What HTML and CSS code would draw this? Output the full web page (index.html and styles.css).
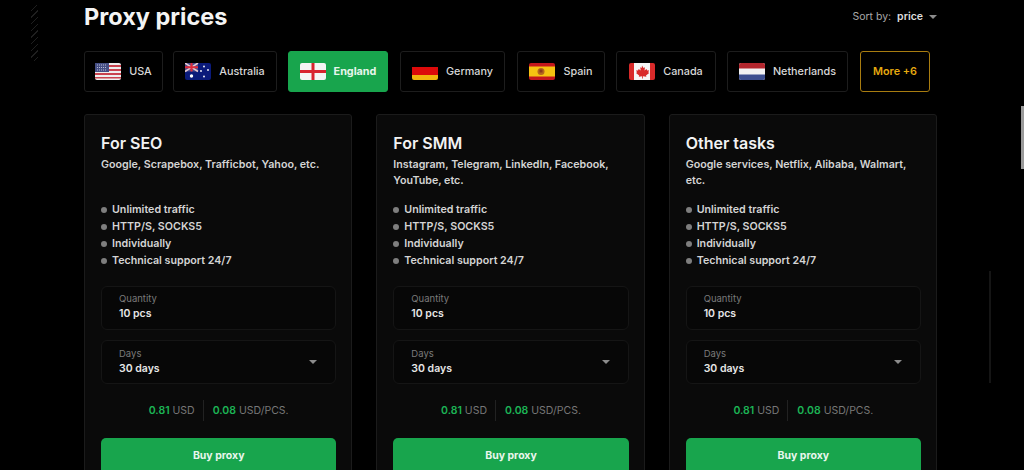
FILE: index.html
```html
<!DOCTYPE html>
<html lang="en">
<head>
    <meta charset="UTF-8">
    <title>Proxy prices</title>
    <link rel="stylesheet" href="styles.css">
</head>
<body>
    <div class="hatch"></div>
    <div class="side-line"></div>
    <div class="scroll-thumb"></div>
    <main class="page">
        <div class="head">
            <h1>Proxy prices</h1>
            <div class="sort"><span>Sort by:</span><b>price</b><i class="arrow"></i></div>
        </div>
        <div class="tabs">
            <a class="tab tab-usa">
                <svg class="flag" viewBox="0 0 26 17"><rect width="26" height="17" rx="2" fill="#eee"/><path d="M0 2h26v2H0zM0 6h26v2H0zM0 10h26v2H0zM0 14h26v1.500H0z" fill="#c9424e"/><rect width="14" height="9" fill="#454f85"/><path d="M2 2h10M2 4.500h10M2 7h10" stroke="#b9bcd4" stroke-width="1" stroke-dasharray="1 1"/></svg>
                USA
            </a>
            <a class="tab tab-aus">
                <svg class="flag" viewBox="0 0 26 17"><rect width="26" height="17" rx="2" fill="#0a1a7a"/><rect width="13" height="8.500" fill="#4a4a8c"/><path d="M0 0l13 8.500M13 0L0 8.500" stroke="#e6c9cf" stroke-width="1.500"/><path d="M6.500 0v8.500M0 4.250h13" stroke="#e02a3a" stroke-width="2"/><circle cx="6.500" cy="13" r="1.700" fill="#fff"/><circle cx="19" cy="3.500" r=".9" fill="#fff"/><circle cx="23" cy="7" r=".9" fill="#fff"/><circle cx="16" cy="8" r=".9" fill="#fff"/><circle cx="19" cy="13.500" r=".9" fill="#fff"/></svg>
                Australia
            </a>
            <a class="tab tab-eng active">
                <svg class="flag" viewBox="0 0 26 17"><rect width="26" height="17" rx="2" fill="#f4f4f4"/><path d="M13 0v17M0 8.500h26" stroke="#d8232f" stroke-width="3"/></svg>
                England
            </a>
            <a class="tab tab-ger">
                <svg class="flag" viewBox="0 0 26 17"><rect y="4" width="26" height="9" fill="#dd0a0a"/><path d="M0 12h26v3a2 2 0 0 1-2 2H2a2 2 0 0 1-2-2z" fill="#f2b40c"/></svg>
                Germany
            </a>
            <a class="tab tab-esp">
                <svg class="flag" viewBox="0 0 26 17"><rect width="26" height="17" rx="2" fill="#c4161c"/><rect y="3.500" width="26" height="10" fill="#f5c211"/><circle cx="12" cy="8.500" r="3.500" fill="#b5651d"/><rect x="10.500" y="6.500" width="3" height="3" fill="#8c3a1a"/></svg>
                Spain
            </a>
            <a class="tab tab-can">
                <svg class="flag" viewBox="0 0 26 17"><rect width="26" height="17" rx="2" fill="#d92a2a"/><rect x="5" width="16" height="17" fill="#f6f6f6"/><path d="M13 2.500l1.500 2.500 1.500-.7-.5 3.200 2-1.500.7 1.500 1.800-.3-.7 2.300.9.600-3.200 2.400.4 1.200-3.400-.5v2.300h-.8v-2.300l-3.400.5.400-1.200-3.200-2.400.9-.6-.7-2.300 1.800.3.700-1.500 2 1.500-.5-3.200 1.500.7z" fill="#d92a2a"/></svg>
                Canada
            </a>
            <a class="tab tab-ned">
                <svg class="flag" viewBox="0 0 26 17"><rect width="26" height="17" rx="2" fill="#f2f2f2"/><path d="M0 5.500V2a2 2 0 0 1 2-2h22a2 2 0 0 1 2 2v3.500z" fill="#b3262d"/><path d="M0 11.500h26V15a2 2 0 0 1-2 2H2a2 2 0 0 1-2-2z" fill="#3d4f8f"/></svg>
                Netherlands
            </a>
            <a class="tab tab-more">More +6</a>
        </div>
        <div class="cards">
            <section class="card">
                <h2>For SEO</h2>
                <p class="sites">Google, Scrapebox, Trafficbot, Yahoo, etc.</p>
                <ul class="features">
                    <li>Unlimited traffic</li>
                    <li>HTTP/S, SOCKS5</li>
                    <li>Individually</li>
                    <li>Technical support 24/7</li>
                </ul>
                <div class="field"><label>Quantity</label><span>10 pcs</span></div>
                <div class="field field-select"><label>Days</label><span>30 days</span><i class="arrow"></i></div>
                <div class="price"><div><b>0.81</b> USD</div><div><b>0.08</b> USD/PCS.</div></div>
                <a class="buy">Buy proxy</a>
            </section>
            <section class="card">
                <h2>For SMM</h2>
                <p class="sites">Instagram, Telegram, LinkedIn, Facebook, YouTube, etc.</p>
                <ul class="features">
                    <li>Unlimited traffic</li>
                    <li>HTTP/S, SOCKS5</li>
                    <li>Individually</li>
                    <li>Technical support 24/7</li>
                </ul>
                <div class="field"><label>Quantity</label><span>10 pcs</span></div>
                <div class="field field-select"><label>Days</label><span>30 days</span><i class="arrow"></i></div>
                <div class="price"><div><b>0.81</b> USD</div><div><b>0.08</b> USD/PCS.</div></div>
                <a class="buy">Buy proxy</a>
            </section>
            <section class="card">
                <h2>Other tasks</h2>
                <p class="sites">Google services, Netflix, Alibaba, Walmart, etc.</p>
                <ul class="features">
                    <li>Unlimited traffic</li>
                    <li>HTTP/S, SOCKS5</li>
                    <li>Individually</li>
                    <li>Technical support 24/7</li>
                </ul>
                <div class="field"><label>Quantity</label><span>10 pcs</span></div>
                <div class="field field-select"><label>Days</label><span>30 days</span><i class="arrow"></i></div>
                <div class="price"><div><b>0.81</b> USD</div><div><b>0.08</b> USD/PCS.</div></div>
                <a class="buy">Buy proxy</a>
            </section>
        </div>
    </main>
</body>
</html>
```

FILE: styles.css
```css
html, body {
    margin: 0;
    height: 470px;
    overflow: hidden;
    background-color: #000000;
}
body {
    font-family: Inter, "Liberation Sans", sans-serif;
    color: #eeeeee;
}
.page {
    width: 853px;
    margin-left: 84px;
}
.head {
    display: flex;
    justify-content: space-between;
    align-items: center;
    height: 33px;
}
h1 {
    margin: 0;
    font-size: 23.500px;
    font-weight: 700;
    color: #f4f4f4;
}
.sort {
    display: flex;
    align-items: center;
    font-size: 10.500px;
    color: #a8a8a8;
}
.sort b {
    margin: 0 6px;
    color: #dddddd;
    font-weight: 600;
}
.arrow {
    display: block;
    width: 0;
    height: 0;
    border-left: 4px solid transparent;
    border-right: 4px solid transparent;
    border-top: 4px solid #8c8c8c;
}
.tabs {
    display: flex;
    margin-top: 18px;
}
.tab {
    display: flex;
    align-items: center;
    justify-content: center;
    box-sizing: border-box;
    height: 41px;
    gap: 8px;
    border: 1px solid #1d1d1d;
    border-radius: 3px;
    font-size: 10.800px;
    font-weight: 500;
    color: #d8d8d8;
    white-space: nowrap;
}
.flag {
    width: 26px;
    height: 17px;
    flex: none;
}
.tab-usa { width: 79px; margin-right: 10px; }
.tab-aus { width: 104px; margin-right: 11px; }
.tab-eng { width: 100px; margin-right: 12px; }
.tab-ger { width: 105px; margin-right: 12px; }
.tab-esp { width: 88px; margin-right: 11px; }
.tab-can { width: 100px; margin-right: 11px; }
.tab-ned { width: 121px; margin-right: 12px; }
.tab-more { width: 70px; }
.tab.active {
    background-color: #18a54d;
    border-color: #18a54d;
    color: #e8f6ec;
    font-weight: 700;
}
.tab-more {
    border-color: #a87c10;
    color: #e6a90f;
    font-weight: 600;
}
.cards {
    display: grid;
    grid-template-columns: repeat(3, 1fr);
    gap: 24px;
    margin-top: 22px;
}
.card {
    box-sizing: border-box;
    height: 400px;
    padding: 17px 15px 17px 16px;
    background-color: #0a0a0a;
    border: 1px solid #1b1b1b;
    border-radius: 3px;
}
h2 {
    margin: 0;
    font-size: 16px;
    line-height: 22px;
    font-weight: 600;
    color: #f2f2f2;
}
.sites {
    height: 34px;
    margin: 3px 0 0;
    font-size: 10.700px;
    line-height: 16px;
    font-weight: 600;
    color: #d4d4d4;
}
.features {
    list-style: none;
    margin: 0;
    padding: 10px 0 0;
    height: 85px;
    font-size: 10.700px;
    font-weight: 600;
    color: #d4d4d4;
}
.features li {
    display: flex;
    align-items: center;
    height: 17px;
}
.features li::before {
    content: "";
    width: 6px;
    height: 6px;
    margin-right: 5px;
    border-radius: 50%;
    background-color: #7e7e7e;
}
.field {
    position: relative;
    box-sizing: border-box;
    height: 44px;
    margin-bottom: 10px;
    padding: 5px 17px;
    background-color: #070707;
    border: 1px solid #151515;
    border-radius: 6px;
}
.field label {
    display: block;
    font-size: 9.500px;
    line-height: 13px;
    color: #7a7a7a;
}
.field span {
    display: block;
    font-size: 10.500px;
    line-height: 17px;
    font-weight: 600;
    color: #e6e6e6;
}
.field-select {
    padding-top: 7px;
}
.field-select label {
    line-height: 12px;
}
.field-select .arrow {
    position: absolute;
    right: 18px;
    top: 19px;
}
.price {
    display: flex;
    justify-content: center;
    margin-top: 16px;
    font-size: 10.500px;
    line-height: 21px;
    color: #777777;
}
.price div + div {
    margin-left: 8px;
    padding-left: 9px;
    border-left: 1px solid #222222;
}
.price b {
    color: #1cb455;
    font-weight: 600;
}
.buy {
    display: block;
    margin-top: 17px;
    height: 44px;
    line-height: 36px;
    text-align: center;
    border-radius: 5px;
    background-color: #18a54d;
    color: #e8f6ec;
    font-size: 10.500px;
    font-weight: 700;
}
.hatch {
    position: absolute;
    left: 31px;
    top: 5px;
    width: 7px;
    height: 56px;
    background-image: repeating-linear-gradient(135deg, transparent 0, transparent 3.700px, #1f1f1f 3.700px, #1f1f1f 4.700px);
}
.side-line {
    position: absolute;
    left: 989px;
    top: 271px;
    width: 2px;
    height: 112px;
    background-color: #151515;
}
.scroll-thumb {
    position: absolute;
    left: 1021px;
    top: 106px;
    width: 3px;
    height: 63px;
    background-color: #9a9a9a;
}
```
